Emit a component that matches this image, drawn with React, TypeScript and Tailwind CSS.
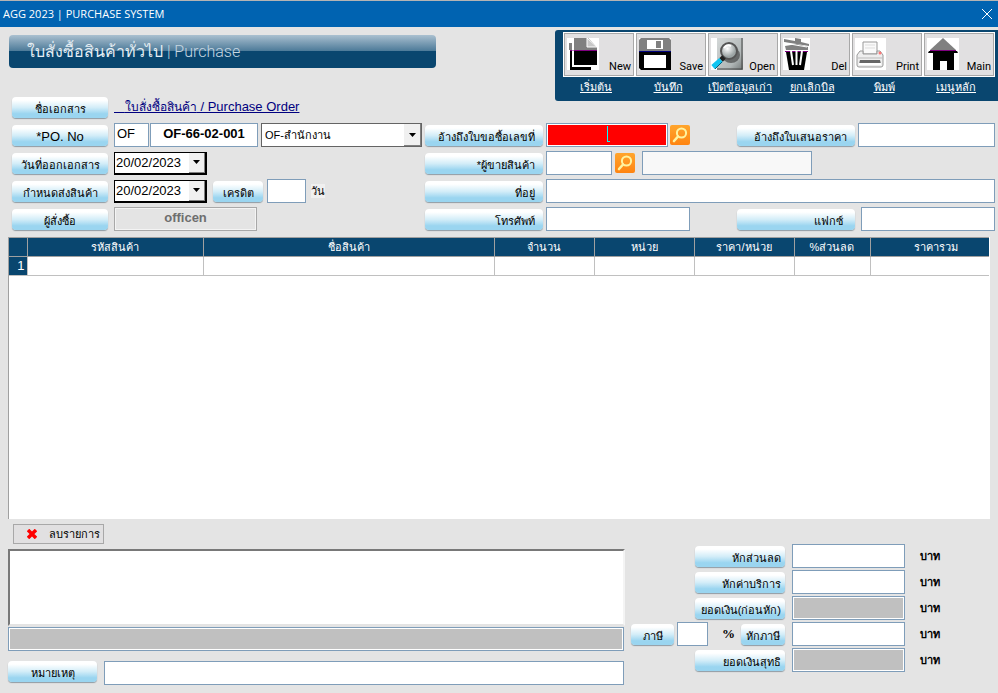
import React from "react";

type Col = { title: string; width: string };

const INPUT =
  "h-[24px] min-w-0 rounded-none border border-[#7f9db9] bg-white px-1 text-[13px] leading-[16px] text-black outline-none";
const GREY_INPUT =
  "h-[24px] min-w-0 rounded-none border border-[#7f9db9] bg-[#c0c0c0] px-1 text-[13px] leading-[16px] text-black shadow-[inset_0_0_0_1px_#ffffff] outline-none";

function Tag({ htmlFor, className, children }: { htmlFor?: string; className: string; children: React.ReactNode }) {
  return (
    <label
      htmlFor={htmlFor}
      className={`flex h-[21px] shrink-0 items-center whitespace-nowrap rounded-[4px] bg-linear-to-b from-white from-15% via-[#d3edf8] via-50% to-[#9ad5f0] to-80% pt-[3px] leading-[18px] text-black shadow-[0_1px_1px_#8f9ba3] ${className}`}
    >
      {children}
    </label>
  );
}

function SearchButton({ label }: { label: string }) {
  return (
    <button type="button" aria-label={label} className="h-5 w-5 shrink-0 rounded-[2px] bg-linear-to-b from-[#ffa52c] to-[#ff8410]">
      <svg viewBox="0 0 20 20" className="h-5 w-5" fill="none" stroke="#fff3a0" strokeWidth="2">
        <circle cx="11.5" cy="8" r="4.6" />
        <path d="M8 11.5 4 16" strokeWidth="2.6" strokeLinecap="round" />
      </svg>
    </button>
  );
}

function ArrowBox({ className }: { className: string }) {
  return (
    <span className={`pointer-events-none col-start-1 row-start-1 flex items-center justify-center justify-self-end border-r border-b border-[#808080] bg-[#f0f0f0] ${className}`}>
      <svg viewBox="0 0 7 4" className="h-1 w-[7px]"><path d="M0 0h7L3.500 4z" fill="#000" /></svg>
    </span>
  );
}

function DateSelect({ id }: { id: string }) {
  return (
    <div className="grid h-[23px] w-[93px] shrink-0 items-center border border-r-2 border-b-2 border-black bg-white">
      <select id={id} className="col-start-1 row-start-1 h-5 w-full appearance-none bg-transparent pl-px text-[13px] leading-[16px] outline-none">
        <option>20/02/2023</option>
      </select>
      <ArrowBox className="h-5 w-4" />
    </div>
  );
}

const tools = [
  {
    name: "New", link: "เริ่มต้น", box: "0 0 32 32", size: "w-8",
    art: (<>
      <path d="M2 5h3v7H2z" fill="#808080" /><path d="M3 13h2v16h19v3H3z" fill="#000" />
      <path d="M7 0h14l9 9v3H7z" fill="#808080" /><path d="M20 0v9h10z" fill="#c8c8c8" stroke="#fff" />
      <path d="M7 13h23v14H7z" fill="#000" /><path d="M3 12h27v1H3z" fill="#800080" />
      <path d="M6 5v23h19" stroke="#fff" />
    </>),
  },
  {
    name: "Save", link: "บันทึก", box: "0 0 32 32", size: "w-8",
    art: (<>
      <path d="M0 2 2 0h28l2 2v11H0z" fill="#808080" /><path d="M0 14h32v18H2l-2-2z" fill="#000" />
      <path d="M0 13h32v1H0z" fill="#000080" /><path d="M8 2h16v9H8zM5 17h22v13H5z" fill="#fff" /><path d="M17 3h5v7h-5z" fill="#808080" />
    </>),
  },
  {
    name: "Open", link: "เปิดข้อมูลเก่า", box: "0 0 32 32", size: "w-8",
    art: (<>
      <defs>
        <linearGradient id="paper" x1="0" y1="0" x2="1" y2="1"><stop stopColor="#d4d8d8" /><stop offset=".7" stopColor="#b0b6b6" /><stop offset="1" stopColor="#707676" /></linearGradient>
        <radialGradient id="lens" cx=".4" cy=".35"><stop stopColor="#fff" /><stop offset="1" stopColor="#9ca4a4" /></radialGradient>
      </defs>
      <path d="M6 0h26v32H6z" fill="url(#paper)" /><path d="M31 0v31H6" stroke="#444" />
      <ellipse cx="20" cy="17" rx="9" ry="8" fill="#333" opacity=".6" />
      <circle cx="18" cy="13" r="8" fill="url(#lens)" stroke="#555" strokeWidth="2" /><path d="M13 10q3-4 7-2" stroke="#fff" strokeWidth="2" />
      <path d="m13 19-3 3" stroke="#222" strokeWidth="5" /><path d="M10 22 2 29" stroke="#11c4f0" strokeWidth="5" /><path d="M11 24 4 31" stroke="#05607f" strokeWidth="1" />
    </>),
  },
  {
    name: "Del", link: "ยกเลิกบิล", box: "0 0 27 32", size: "w-[27px]",
    art: (<>
      <path d="m1 1 11 2V0l6 1v3l8 2v2L1 4z" fill="#808080" />
      <path d="m2 8 12-2 11 3v3H3z" fill="#808080" /><path d="m1 5 23 4" stroke="#fff" />
      <path d="M3 14h21l-3 18H6z" fill="#000" /><path d="M2 13h23v1H2z" fill="#800080" />
      <path d="m8 13 2 14M13.500 13v14M19 13l-2 14" stroke="#fff" strokeWidth="2" />
    </>),
  },
  {
    name: "Print", link: "พิมพ์", box: "0 0 31 32", size: "w-[31px]",
    art: (<>
      <path d="M8 4h14v12H8z" fill="#fafafa" stroke="#999" /><path d="M10 7h10M10 10h10" stroke="#ddd" />
      <path d="M5 13h3v3h14v-3h3l3 4v10q0 2-2 2H4q-2 0-2-2V17z" fill="#eeeeee" stroke="#999" />
      <path d="M2.500 20h25" stroke="#bbb" /><path d="M5 22h20l1 4H4z" fill="#666" /><path d="M4 25h22v2H4z" fill="#fff" /><circle cx="25" cy="15" r="1.500" fill="#f77" />
    </>),
  },
  {
    name: "Main", link: "เมนูหลัก", box: "0 0 32 32", size: "w-8",
    art: (<>
      <path d="M16 0 29 12H3z" fill="#808080" /><path d="M2 13h28l1 2h-4v17h-7V23h-7v9H6V15H1z" fill="#000" /><path d="M3 12h26v1H3z" fill="#800080" />
    </>),
  },
];

const cols: Col[] = [
  { title: "รหัสสินค้า", width: "w-[176px]" },
  { title: "ชื่อสินค้า", width: "w-auto" },
  { title: "จำนวน", width: "w-[100px]" },
  { title: "หน่วย", width: "w-[100px]" },
  { title: "ราคา/หน่วย", width: "w-[100px]" },
  { title: "%ส่วนลด", width: "w-[76px]" },
  { title: "ราคารวม", width: "w-[119px]" },
];

const totals = [
  { id: "disc", text: "หักส่วนลด", grey: false },
  { id: "svc", text: "หักค่าบริการ", grey: false },
  { id: "sub", text: "ยอดเงิน(ก่อนหัก)", grey: true },
  { id: "vat", text: "หักภาษี", grey: false },
  { id: "net", text: "ยอดเงินสุทธิ", grey: true },
];

export default function App() {
  return (
    <div className="flex min-h-screen flex-col bg-[#e4e4e4] font-['Liberation_Sans',sans-serif] text-[11px] text-black">
      <header className="flex h-[27px] shrink-0 items-center justify-between border-t border-[#b4b4b4] bg-[#0063b1] pr-[6px] pl-[3px] text-white">
        <h1 className="font-['Open_Sans',sans-serif] text-[11px] leading-4">AGG 2023 | PURCHASE SYSTEM</h1>
        <button type="button" aria-label="Close">
          <svg viewBox="0 0 10 10" className="h-[10px] w-[10px]" stroke="#fff"><path d="m0 0 10 10M10 0 0 10" /></svg>
        </button>
      </header>

      <div className="flex items-start justify-between pt-[3px] pl-[9px]">
        <h2 className="mt-[5px] flex h-[33px] w-[427px] items-center rounded-[4px] bg-linear-to-b from-[#aac0d0] from-0% via-[#4d7b99] via-48% to-[#09466f] to-50% pl-[18px] text-[16px] leading-6 whitespace-pre text-[#e4edf3]">
          ใบสั่งซื้อสินค้าทั่วไป<span className="font-[Roboto,sans-serif] text-[16px] font-light text-[#c5d6e1]"> | Purchase</span>
        </h2>
        <nav className="h-[71px] w-[443px] rounded-l-[3px] bg-[#09466f] pt-[2px] pl-[8px]">
          <ul className="flex">
            {tools.map((t) => (
              <li key={t.name} className="flex w-[72px] flex-col">
                <button type="button" className="flex h-[45px] w-[72px] items-end justify-between border border-white bg-[#e1e0e1] px-[3px] pb-[2px] shadow-[inset_0_0_0_1px_#a8a8a8]">
                  <svg viewBox={t.box} className={`mb-[4px] h-8 shrink-0 bg-white ${t.size}`} fill="none">{t.art}</svg>
                  <span className="font-[Roboto,sans-serif] text-[11px] leading-[14px]">{t.name}</span>
                </button>
                <a href="#" className="w-[66px] text-center leading-[20px] whitespace-nowrap text-white underline">{t.link}</a>
              </li>
            ))}
          </ul>
        </nav>
      </div>

      <form className="flex flex-col">
        <div className="-mt-[5px] flex h-[22px] items-center pl-3">
          <Tag className="w-[96px] justify-center">ชื่อเอกสาร</Tag>
          <a href="#" className="ml-[6px] text-[13px] leading-[20px] whitespace-pre text-[#000080] underline">
            {"   "}<span className="text-[12px]">ใบสั่งซื้อสินค้า</span>{" / Purchase Order"}
          </a>
        </div>

        <div className="mt-[5px] flex gap-[3px] pl-3">
          <div className="flex w-[410px] shrink-0 flex-col gap-1">
            <div className="flex h-[24px] items-center">
              <Tag htmlFor="po" className="w-[96px] justify-center text-[13px]">*PO. No</Tag>
              <input aria-label="Prefix" defaultValue="OF" className={`${INPUT} ml-[6px] w-[35px] px-[2px] pb-[4px]`} />
              <input id="po" defaultValue="OF-66-02-001" className={`${INPUT} ml-px w-[108px] pb-[4px] text-center font-bold`} />
              <div className="ml-[3px] grid h-[24px] flex-1 items-center border border-[#646464] bg-white">
                <select aria-label="Branch" className="col-start-1 row-start-1 h-[22px] w-full appearance-none bg-transparent pl-[3px] text-[11px] outline-none"><option>OF-สำนักงาน</option></select>
                <ArrowBox className="h-[22px] w-[17px]" />
              </div>
            </div>
            <div className="flex h-[24px] items-center">
              <Tag htmlFor="d1" className="mr-[6px] w-[96px] justify-center">วันที่ออกเอกสาร</Tag>
              <DateSelect id="d1" />
            </div>
            <div className="flex h-[24px] items-center">
              <Tag htmlFor="d2" className="mr-[6px] w-[96px] justify-center">กำหนดส่งสินค้า</Tag>
              <DateSelect id="d2" />
              <Tag htmlFor="credit" className="ml-[6px] w-[50px] justify-center">เครดิต</Tag>
              <input id="credit" className={`${INPUT} ml-1 w-[39px]`} />
              <span className="ml-[5px] bg-[#f0f0f0] leading-[14px]">วัน</span>
            </div>
            <div className="flex h-[24px] items-center">
              <Tag htmlFor="buyer" className="mr-[6px] w-[96px] justify-center">ผู้สั่งซื้อ</Tag>
              <input id="buyer" readOnly defaultValue="officen" className="h-[24px] w-[143px] border border-[#a8a8a8] bg-[#e4e4e4] pb-[4px] text-center text-[13px] font-bold text-[#6e6e6e] shadow-[inset_0_0_0_1px_#f4f4f4] outline-none" />
            </div>
          </div>

          <div className="flex min-w-0 flex-1 flex-col gap-1 pr-[3px]">
            <div className="flex h-[24px] items-center">
              <Tag htmlFor="pr" className="w-[118px] justify-end pr-2">อ้างถึงใบขอซื้อเลขที่</Tag>
              <div className="relative ml-[3px] h-[24px] w-[122px]">
                <input id="pr" className="h-full w-full border border-[#7f9db9] bg-[#ff0000] shadow-[inset_0_0_0_1px_#ffffff] outline-none" />
                <span className="pointer-events-none absolute top-[3px] left-[61px] h-4 w-[3px] border-b border-l border-[#00ffff]" />
              </div>
              <span className="ml-[2px] flex"><SearchButton label="Find request" /></span>
              <Tag htmlFor="quote" className="ml-auto w-[118px] justify-end pr-2">อ้างถึงใบเสนอราคา</Tag>
              <input id="quote" className={`${INPUT} ml-[3px] w-[137px]`} />
            </div>
            <div className="flex h-[24px] items-center">
              <Tag htmlFor="vendor" className="w-[118px] justify-end pr-2">*ผู้ขายสินค้า</Tag>
              <input id="vendor" className={`${INPUT} mr-[3px] ml-[3px] w-[66px]`} />
              <SearchButton label="Find vendor" />
              <input aria-label="Vendor name" readOnly className="ml-[7px] h-[24px] w-[170px] border border-[#7f9db9] bg-[#f8f8f8] outline-none" />
            </div>
            <div className="flex h-[24px] items-center">
              <Tag htmlFor="addr" className="w-[118px] justify-end pr-2">ที่อยู่</Tag>
              <input id="addr" className={`${INPUT} ml-[3px] flex-1`} />
            </div>
            <div className="flex h-[24px] items-center">
              <Tag htmlFor="tel" className="w-[118px] justify-end pr-2">โทรศัพท์</Tag>
              <input id="tel" className={`${INPUT} ml-[3px] w-[144px]`} />
              <Tag htmlFor="fax" className="ml-auto w-[118px] justify-end pr-3">แฟกซ์</Tag>
              <input id="fax" className={`${INPUT} ml-[6px] w-[134px]`} />
            </div>
          </div>
        </div>

        <div className="mt-[6px] mr-2 ml-2 h-[282px] border-l border-[#a0a0a0] bg-white pr-px">
          <table className="w-full table-fixed border-collapse leading-[16px]">
            <thead>
              <tr className="h-[19px] bg-[#09466f] text-white">
                <th className="w-[18px] border-t border-b border-[#a0a0a0] p-0" />
                {cols.map((c) => (
                  <th key={c.title} className={`${c.width} border border-r-0 border-[#a0a0a0] p-0 font-normal last:pl-3`}>{c.title}</th>
                ))}
              </tr>
            </thead>
            <tbody>
              <tr className="h-[19px]">
                <th className="border-b border-[#c0c0c0] bg-[#09466f] p-0 pr-[2px] text-right text-[13px] font-normal text-white">1</th>
                {cols.map((c) => <td key={c.title} className="border border-r-0 border-[#c0c0c0] p-0" />)}
              </tr>
            </tbody>
          </table>
        </div>

        <div className="flex pl-2">
          <div className="flex min-w-0 flex-1 flex-col pt-[5px]">
            <button type="button" className="ml-[5px] flex h-[20px] w-[91px] items-center justify-between border border-[#a8a8a8] bg-[#e1e0e1] pr-[3px] pl-[13px]">
              <svg viewBox="0 0 10 10" className="h-[10px] w-[10px]" stroke="#f00" strokeWidth="3.5"><path d="m1 1 8 8M9 1 1 9" /></svg>
              ลบรายการ
            </button>
            <textarea aria-label="Details" className="mt-[5px] h-[77px] w-full resize-none border-2 border-t-[#787878] border-r-[#f4f4f4] border-b-[#e4e4e4] border-l-[#787878] bg-white outline-none" />
            <input aria-label="Amount in words" readOnly className={`${GREY_INPUT} mt-px mr-px`} />
            <div className="mt-[10px] mr-px flex gap-[7px]">
              <Tag htmlFor="note" className="w-[89px] justify-center">หมายเหตุ</Tag>
              <input id="note" className={`${INPUT} flex-1`} />
            </div>
          </div>
          <div className="flex w-[373px] shrink-0 flex-col gap-[2px] pt-[25px] pr-[57px] pl-[6px]">
            {totals.map((r) => (
              <div key={r.id} className="flex h-[24px] items-center justify-end">
                {r.id === "vat" && (
                  <>
                    <Tag htmlFor="rate" className="w-[43px] justify-center">ภาษี</Tag>
                    <input id="rate" className={`${INPUT} ml-[3px] w-[31px]`} />
                    <span className="flex-1 pl-[14px] font-['Liberation_Serif',serif] text-[13px] font-bold">%</span>
                  </>
                )}
                <Tag htmlFor={r.id} className={r.id === "vat" ? "w-[44px] justify-center" : "w-[90px] justify-end pr-1"}>{r.text}</Tag>
                <input id={r.id} readOnly={r.grey} className={`${r.grey ? GREY_INPUT : INPUT} ml-[7px] w-[113px]`} />
                <span className="ml-[15px] w-[21px] font-bold">บาท</span>
              </div>
            ))}
          </div>
        </div>
      </form>
    </div>
  );
}
